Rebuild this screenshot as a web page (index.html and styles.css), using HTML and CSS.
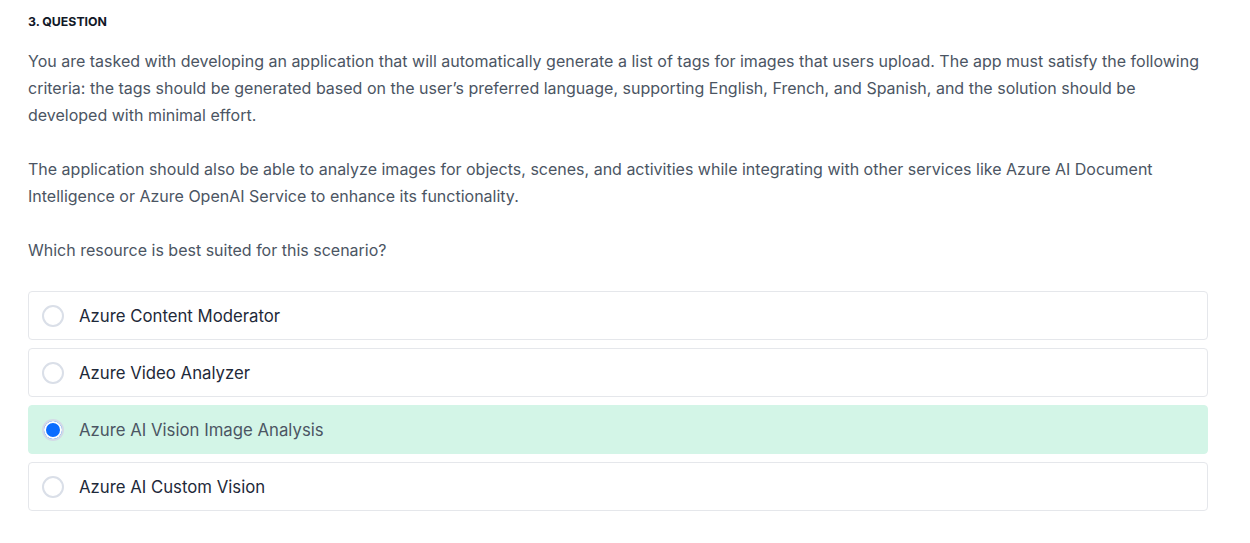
FILE: index.html
```html
<!DOCTYPE html>
<html lang="en">
<head>
<meta charset="utf-8">
<title>Question 3</title>
<link rel="stylesheet" href="styles.css">
</head>
<body>
<div class="question">
  <h2 class="q-title">3. Question</h2>
  <div class="q-body">
    <p>You are tasked with developing an application that will automatically generate a list of tags for images that users upload. The app must satisfy the following criteria: the tags should be generated based on the user’s preferred language, supporting English, French, and Spanish, and the solution should be developed with minimal effort.</p>
    <p>The application should also be able to analyze images for objects, scenes, and activities while integrating with other services like Azure AI Document Intelligence or Azure OpenAI Service to enhance its functionality.</p>
    <p>Which resource is best suited for this scenario?</p>
  </div>
  <ul class="options">
    <li class="option"><span class="radio"></span><span class="label">Azure Content Moderator</span></li>
    <li class="option"><span class="radio"></span><span class="label">Azure Video Analyzer</span></li>
    <li class="option selected"><span class="radio"></span><span class="label">Azure AI Vision Image Analysis</span></li>
    <li class="option"><span class="radio"></span><span class="label">Azure AI Custom Vision</span></li>
  </ul>
</div>
</body>
</html>
```
FILE: styles.css
```css
html, body {
  margin: 0;
  padding: 0;
  background: #ffffff;
}
body {
  font-family: Inter, "Noto Sans", "Liberation Sans", sans-serif;
  color: #1e2939;
}
.question {
  width: 1180px;
  padding: 14px 0 0 28px;
}
.q-title {
  margin: 0;
  font-size: 12.3px;
  line-height: 16px;
  font-weight: 700;
  text-transform: uppercase;
  color: #111827;
}
.q-body {
  margin-top: 18px;
}
.q-body p {
  margin: 0 0 27px;
  font-size: 16px;
  line-height: 27px;
  color: #4b5563;
}
.options {
  list-style: none;
  margin: 0;
  padding: 0;
  display: flex;
  flex-direction: column;
  gap: 8px;
}
.option {
  display: flex;
  align-items: center;
  gap: 15px;
  height: 49px;
  box-sizing: border-box;
  padding: 0 13px;
  border: 1px solid #e5e7eb;
  border-radius: 4px;
  font-size: 16.75px;
  color: #1e2939;
}
.radio {
  width: 22px;
  height: 22px;
  box-sizing: border-box;
  border: 2px solid #dadfe8;
  border-radius: 50%;
  background: #fff;
  flex: none;
}
.option.selected {
  background: #d3f5e7;
  border-color: #d3f5e7;
  color: #4b5563;
}
.option.selected .radio {
  background: #0a6cff;
  border-color: #d3dae6;
  box-shadow: inset 0 0 0 2px #ffffff;
}
```
